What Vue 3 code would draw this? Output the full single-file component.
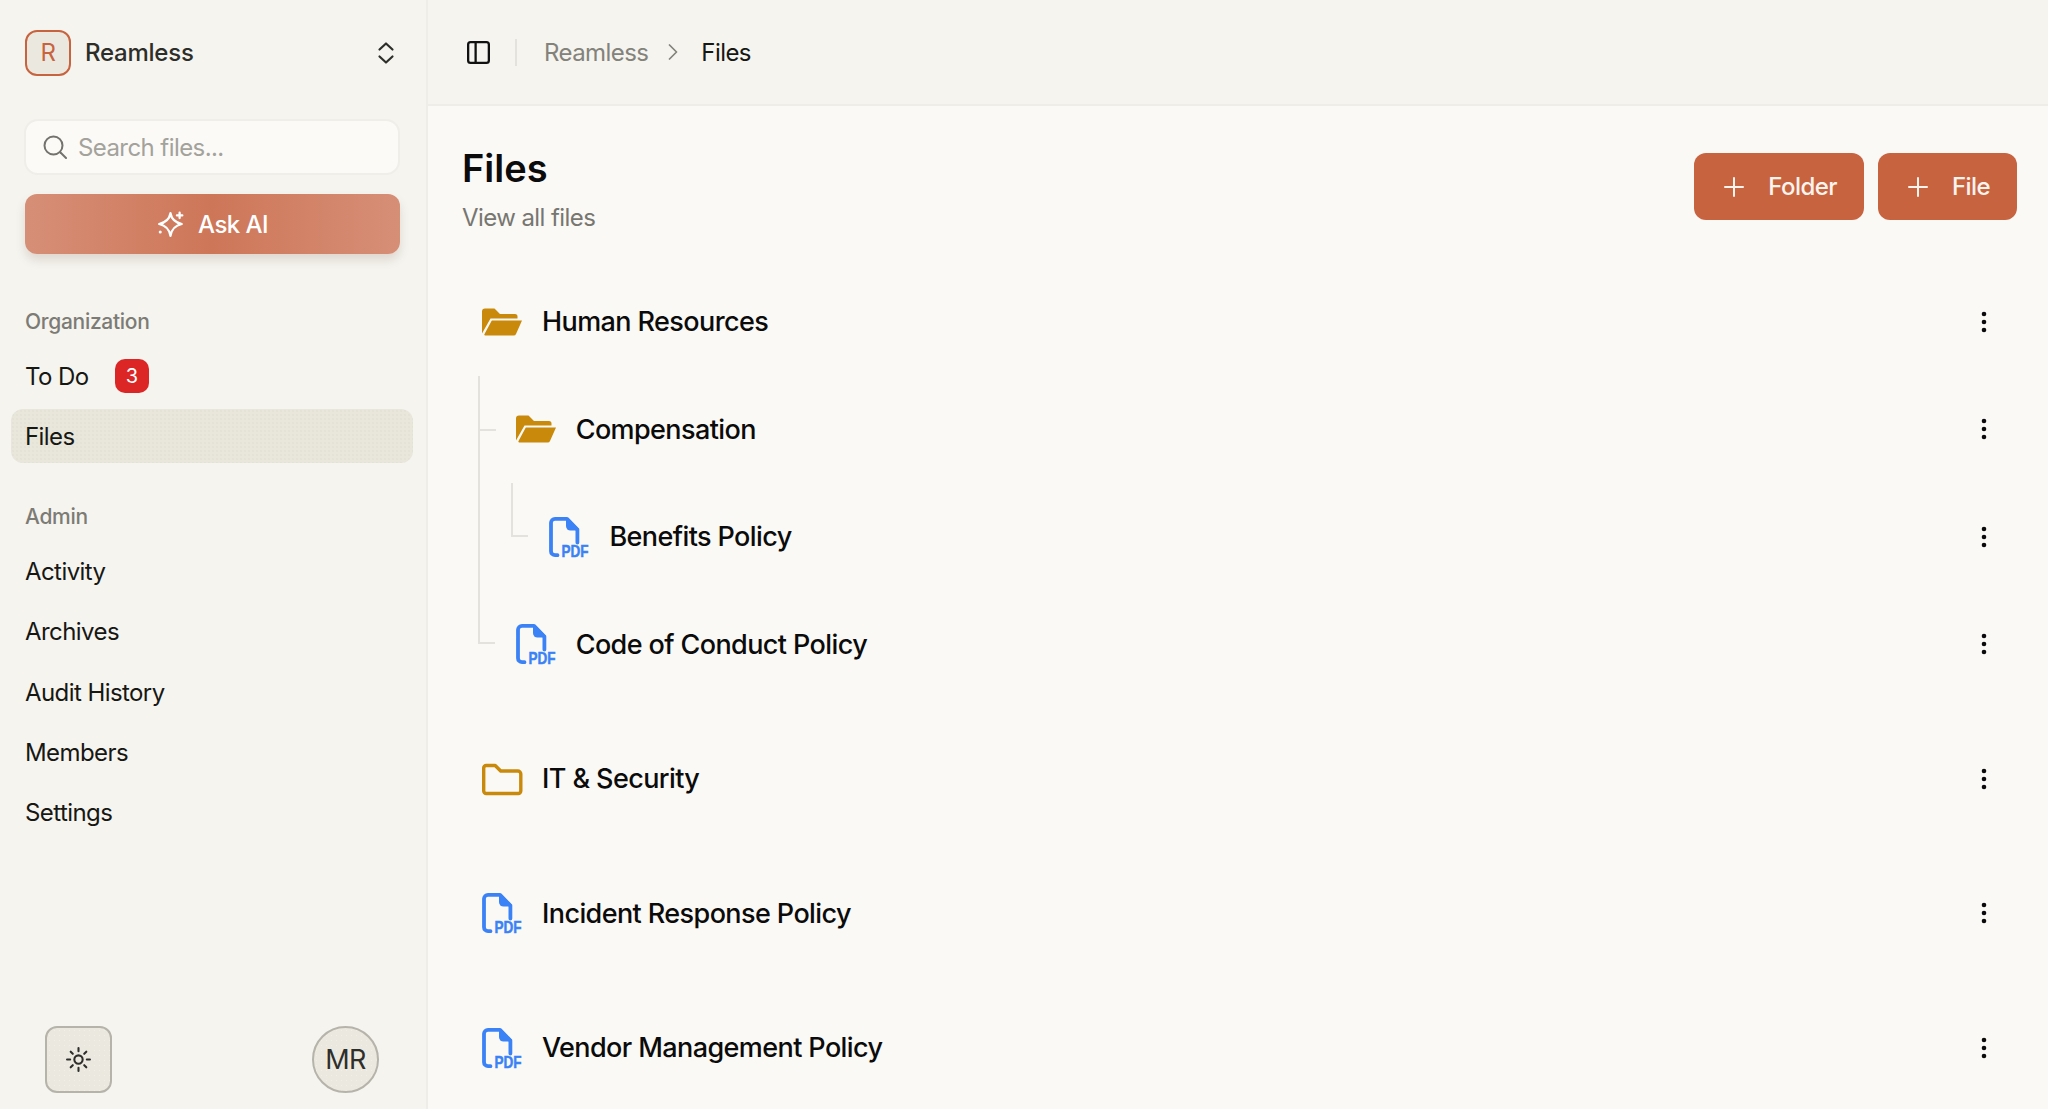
<script setup>
const adminLinks = ['Activity', 'Archives', 'Audit History', 'Members', 'Settings']

const rows = [
  { name: 'Human Resources', icon: 'open', depth: 0, lines: [] },
  { name: 'Compensation', icon: 'open', depth: 1, lines: ['tee-one'] },
  { name: 'Benefits Policy', icon: 'pdf', depth: 2, lines: ['through-one', 'end-two'] },
  { name: 'Code of Conduct Policy', icon: 'pdf', depth: 1, lines: ['end-one'] },
  { name: 'IT & Security', icon: 'closed', depth: 0, lines: [], spaced: true },
  { name: 'Incident Response Policy', icon: 'pdf', depth: 0, lines: [], spaced: true },
  { name: 'Vendor Management Policy', icon: 'pdf', depth: 0, lines: [], spaced: true }
]
</script>

<template>
  <div class="app">
    <aside class="sidebar">
      <header class="brand">
        <div class="logo">R</div>
        <span class="brand-name">Reamless</span>
        <svg class="selector" viewBox="0 0 24 24" fill="none" stroke="currentColor" stroke-width="2.200" stroke-linecap="round" stroke-linejoin="round">
          <path d="M5.500 8.500L12 2.500l6.500 6" />
          <path d="M5.500 15.500l6.500 6 6.500-6" />
        </svg>
      </header>

      <label class="search">
        <svg viewBox="0 0 24 24" fill="none" stroke="currentColor" stroke-width="2" stroke-linecap="round">
          <circle cx="10.500" cy="10.500" r="9" />
          <path d="M17.500 17.500l5.500 5.500" />
        </svg>
        <input type="text" placeholder="Search files..." />
      </label>

      <button class="ask">
        <svg viewBox="0 0 26 26" fill="none" stroke="currentColor" stroke-width="2.100" stroke-linejoin="round" stroke-linecap="round">
          <path d="M12.500 3c1 5.500 4 8.500 10.500 10-6.500 1.500-9.500 4.500-10.500 11-1-6.500-4-9.500-10.500-11 6.500-1.500 9.500-4.500 10.500-10z" />
          <path d="M21 2.500v5M18.500 5h5" />
          <path d="M3 20.500v.01" stroke-width="2.800" />
        </svg>
        <span>Ask AI</span>
      </button>

      <nav class="nav">
        <div class="nav-label">Organization</div>
        <ul class="nav-list">
          <li class="nav-item">To Do <span class="badge">3</span></li>
          <li class="nav-item active">Files</li>
        </ul>
        <div class="nav-label second">Admin</div>
        <ul class="nav-list">
          <li v-for="link in adminLinks" :key="link" class="nav-item">{{ link }}</li>
        </ul>
      </nav>

      <footer class="side-foot">
        <button class="theme">
          <svg viewBox="0 0 24 24" fill="none" stroke="currentColor" stroke-width="2" stroke-linecap="round">
            <circle cx="12" cy="12" r="4" />
            <path d="M12 1v3M12 20v3M1 12h3M20 12h3M4.500 4.500l2 2M17.500 17.500l2 2M4.500 19.500l2-2M17.500 6.500l2-2" />
          </svg>
        </button>
        <div class="avatar">MR</div>
      </footer>
    </aside>

    <main class="main">
      <div class="topbar">
        <svg class="panel" viewBox="0 0 24 24" fill="none" stroke="currentColor" stroke-width="2.400" stroke-linejoin="round">
          <rect x="1.200" y="1.200" width="21.600" height="21.600" rx="2.500" />
          <path d="M9 1.200v21.600" />
        </svg>
        <span class="divider"></span>
        <span class="crumb">Reamless</span>
        <svg class="crumb-chevron" viewBox="0 0 10 16" fill="none" stroke="currentColor" stroke-width="1.700" stroke-linecap="round" stroke-linejoin="round">
          <path d="M1.500 1l7 7-7 7" />
        </svg>
        <span class="crumb current">Files</span>
      </div>

      <div class="content">
        <div class="page-head">
          <div>
            <h1>Files</h1>
            <p>View all files</p>
          </div>
          <div class="actions">
            <button class="primary">
              <svg viewBox="0 0 20 20" fill="none" stroke="currentColor" stroke-width="2" stroke-linecap="round"><path d="M10 1v18M1 10h18" /></svg>
              Folder
            </button>
            <button class="primary">
              <svg viewBox="0 0 20 20" fill="none" stroke="currentColor" stroke-width="2" stroke-linecap="round"><path d="M10 1v18M1 10h18" /></svg>
              File
            </button>
          </div>
        </div>

        <div class="tree">
          <div
            v-for="row in rows"
            :key="row.name"
            class="row"
            :class="{ spaced: row.spaced }"
            :style="{ paddingLeft: 20 + row.depth * 33.7 + 'px' }"
          >
            <span v-for="line in row.lines" :key="line" class="guide" :class="line"></span>

            <svg v-if="row.icon === 'open'" class="icon" viewBox="0 0 40 40" fill="#c98a0b">
              <path d="M0 9.500a3 3 0 0 1 3-3h9.500l5.500 5.500h15a2.500 2.500 0 0 1 2.500 2.500v2H8.500L0 31.500z" />
              <path d="M9.800 18.500H40l-6 13.500a2.500 2.500 0 0 1-2.300 1.500H3.500a1 1 0 0 1-1-1.400z" />
            </svg>
            <svg v-else-if="row.icon === 'closed'" class="icon" viewBox="0 0 40 40" fill="none" stroke="#c98a0b" stroke-width="3.400" stroke-linejoin="round">
              <path d="M1.700 9a2.500 2.500 0 0 1 2.500-2.500h9l5.500 5.500h17.100a3 3 0 0 1 3 3V32a2.500 2.500 0 0 1-2.500 2.500H4.200A2.500 2.500 0 0 1 1.700 32z" />
            </svg>
            <svg v-else class="icon" viewBox="0 0 40 40">
              <path d="M8.500 38.200H6a4 4 0 0 1-4-4V5.800a4 4 0 0 1 4-4h12l10.400 10.800V25.500" fill="none" stroke="#3b82f6" stroke-width="3.800" stroke-linecap="round" stroke-linejoin="round" />
              <path d="M17 1.500h2.500l10.500 10.500v1.500h-8.500a4.500 4.500 0 0 1-4.500-4.500z" fill="#3b82f6" />
              <text x="12.500" y="39.800" class="pdf" textLength="27" lengthAdjust="spacingAndGlyphs">PDF</text>
            </svg>

            <span class="row-name">{{ row.name }}</span>

            <svg class="kebab" viewBox="0 0 24 24" fill="#0b0b0b">
              <circle cx="12" cy="4" r="2.300" />
              <circle cx="12" cy="12" r="2.300" />
              <circle cx="12" cy="20" r="2.300" />
            </svg>
          </div>
        </div>
      </div>
    </main>
  </div>
</template>

<style>
html,
body {
  margin: 0;
  background: #faf9f5;
}
</style>

<style scoped>
* {
  box-sizing: border-box;
}

.app {
  display: flex;
  height: 100vh;
  overflow: hidden;
  font-family: Inter, "Liberation Sans", sans-serif;
  font-size: 24px;
  letter-spacing: -0.024em;
  color: #171714;
  background: #faf9f5;
}

.sidebar {
  display: flex;
  flex-direction: column;
  flex: 0 0 428px;
  background: #f5f4ef;
  border-right: 2px solid #eeede8;
}

.brand {
  display: flex;
  align-items: center;
  height: 105px;
  padding: 0 28px 0 25px;
}

.logo {
  display: grid;
  place-items: center;
  width: 46px;
  height: 46px;
  border: 2px solid #c8633f;
  border-radius: 12px;
  background: #ebe9df;
  color: #c8633f;
}

.brand-name {
  margin-left: 14px;
  font-weight: 550;
  letter-spacing: -0.01em;
  color: #2d2d2a;
}

.selector {
  width: 24px;
  height: 24px;
  margin-left: auto;
  color: #2d2d2a;
}

.search {
  display: flex;
  align-items: center;
  gap: 11px;
  width: 376px;
  height: 56px;
  margin: 14px 0 0 24px;
  padding: 0 17px;
  border: 2px solid #efeee9;
  border-radius: 14px;
  background: #fbfaf7;
}

.search svg {
  flex: none;
  width: 24px;
  height: 24px;
  color: #73726c;
}

.search input {
  width: 100%;
  border: 0;
  outline: 0;
  padding: 0;
  background: transparent;
  font: inherit;
  letter-spacing: inherit;
  color: inherit;
}

.search input::placeholder {
  color: #a3a29b;
  opacity: 1;
}

.ask {
  display: flex;
  align-items: center;
  justify-content: center;
  gap: 13px;
  width: 375px;
  height: 60px;
  margin: 19px 0 0 25px;
  border: 0;
  border-radius: 12px;
  background: linear-gradient(90deg, #d68f77, #ce7658 50%, #d68f77);
  box-shadow: 0 6px 10px rgba(120, 90, 70, 0.18);
  font: inherit;
  font-weight: 500;
  letter-spacing: inherit;
  color: #fff;
}

.ask svg {
  width: 28px;
  height: 28px;
}

.nav {
  margin-top: 53px;
}

.nav-label {
  height: 30px;
  padding-left: 25px;
  font-size: 21px;
  font-weight: 450;
  letter-spacing: -0.014em;
  line-height: 30px;
  color: #7c7b75;
}

.nav-label.second {
  margin-top: 39px;
}

.nav-list {
  display: flex;
  flex-direction: column;
  gap: 6.4px;
  margin: 12px 13px 0 11px;
  padding: 0;
  list-style: none;
}

.nav-item {
  display: flex;
  align-items: center;
  height: 54px;
  padding-left: 14px;
  border-radius: 12px;
}

.nav-item.active {
  background-color: #e9e7dc;
  background-image: radial-gradient(#e5e3d7 0.7px, transparent 1px);
  background-size: 4px 4px;
}

.badge {
  display: grid;
  place-items: center;
  width: 34px;
  height: 34px;
  margin-left: 26px;
  border-radius: 10px;
  background: #dc2626;
  font-size: 20px;
  color: #fff;
}

.side-foot {
  display: flex;
  align-items: center;
  justify-content: space-between;
  margin-top: auto;
  padding: 0 47px 16px 45px;
}

.theme,
.avatar {
  display: grid;
  place-items: center;
  width: 67px;
  height: 67px;
  padding: 0;
  border: 2px solid #b5b3aa;
  background-color: #ebe9df;
  background-image: radial-gradient(#f1f0e7 0.7px, transparent 1px);
  background-size: 5px 5px;
  color: #2f2e2b;
}

.theme {
  border-radius: 12px;
}

.theme svg {
  width: 25px;
  height: 25px;
}

.avatar {
  border-radius: 50%;
  font-size: 27px;
}

.main {
  flex: 1;
  min-width: 0;
}

.topbar {
  display: flex;
  align-items: center;
  height: 106px;
  padding-left: 39px;
  background: #f5f4ef;
  border-bottom: 2px solid #eeede8;
}

.panel {
  width: 23px;
  height: 23px;
  color: #111;
}

.divider {
  width: 2px;
  height: 27px;
  margin: 0 27px 0 25px;
  background: #e3e2dc;
}

.crumb {
  color: #83827b;
}

.crumb.current {
  color: #171714;
}

.crumb-chevron {
  width: 10px;
  height: 16px;
  margin: 0 23px 0 20px;
  color: #83827b;
}

.content {
  padding: 0 31px 0 34px;
}

.page-head {
  display: flex;
  justify-content: space-between;
  padding-top: 40px;
}

h1 {
  margin: 0;
  font-size: 38px;
  line-height: 44px;
  font-weight: 600;
  letter-spacing: 0;
  color: #0b0b0b;
}

.page-head p {
  margin: 11px 0 0;
  line-height: 34px;
  color: #777670;
}

.actions {
  display: flex;
  gap: 14px;
  margin-top: 7px;
}

.primary {
  display: flex;
  align-items: center;
  height: 67px;
  padding: 0 27px 0 30px;
  gap: 24px;
  border: 0;
  border-radius: 12px;
  background: #c8633f;
  font: inherit;
  font-weight: 500;
  letter-spacing: inherit;
  color: #fbf3ee;
}

.primary svg {
  width: 20px;
  height: 20px;
}

.tree {
  margin-top: 33px;
}

.row {
  position: relative;
  display: flex;
  align-items: center;
  height: 107.5px;
  padding-right: 21px;
}

.row.spaced {
  margin-top: 27px;
}

.icon {
  flex: none;
  width: 40px;
  height: 40px;
  overflow: visible;
}

.pdf {
  font-family: "Liberation Sans", sans-serif;
  font-weight: 700;
  font-size: 17px;
  letter-spacing: 0;
  fill: #3b82f6;
  stroke: #3b82f6;
  stroke-width: 0.5px;
}

.row-name {
  margin-left: 20px;
  font-size: 27px;
  font-weight: 450;
  letter-spacing: -0.022em;
  color: #0b0b0b;
}

.kebab {
  width: 24px;
  height: 24px;
  margin-left: auto;
}

.guide {
  position: absolute;
  top: 0;
  border-left: 2px solid #e3e2dc;
}

.tee-one,
.through-one {
  left: 16px;
  height: 100%;
}

.tee-one::after {
  content: "";
  position: absolute;
  top: 50%;
  left: 0;
  width: 16px;
  border-top: 2px solid #e3e2dc;
}

.end-one,
.end-two {
  width: 17px;
  height: 50%;
  border-bottom: 2px solid #e3e2dc;
}

.end-one {
  left: 16px;
}

.end-two {
  left: 49px;
}
</style>
